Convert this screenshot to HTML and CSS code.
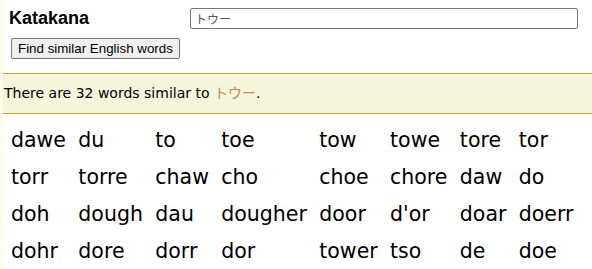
FILE: index.html
```html
<!DOCTYPE html>
<html lang="en">
<head>
    <meta charset="UTF-8">
    <meta name="viewport" content="width=device-width, initial-scale=1.0">
    <title>Katakana to English</title>
    <link rel="stylesheet" href="styles.css">
</head>
<body>
    <div class="page">
        <form class="lookup">
            <div class="lookup-row">
                <label class="lookup-label" for="kana">Katakana</label>
                <input type="text" class="lookup-input" id="kana" value="トウー">
            </div>
            <button type="button" class="lookup-button">Find similar English words</button>
        </form>

        <div class="result">
            There are 32 words similar to <span class="kana">トウー</span>.
        </div>

        <table class="words">
            <tr><td>dawe</td><td>du</td><td>to</td><td>toe</td><td>tow</td><td>towe</td><td>tore</td><td>tor</td></tr>
            <tr><td>torr</td><td>torre</td><td>chaw</td><td>cho</td><td>choe</td><td>chore</td><td>daw</td><td>do</td></tr>
            <tr><td>doh</td><td>dough</td><td>dau</td><td>dougher</td><td>door</td><td>d'or</td><td>doar</td><td>doerr</td></tr>
            <tr><td>dohr</td><td>dore</td><td>dorr</td><td>dor</td><td>tower</td><td>tso</td><td>de</td><td>doe</td></tr>
        </table>
    </div>
</body>
</html>
```

FILE: styles.css
```css
body {
    margin: 0;
    background-color: #fdfdea;
    font-family: "DejaVu Sans", Verdana, sans-serif;
    color: #000;
}

.page {
    margin-left: 3px;
    min-height: 100vh;
    background-color: #fff;
}

.lookup {
    margin: 0;
    padding: 8px 0 0 6px;
}

.lookup-row {
    display: flex;
    align-items: center;
}

.lookup-label {
    width: 181px;
    font-family: "Liberation Sans", Arial, sans-serif;
    font-size: 18px;
    font-weight: bold;
}

.lookup-input {
    box-sizing: border-box;
    width: 388px;
    height: 21px;
    margin: 0;
    padding: 1px 4px;
    border: 1px solid #767676;
    border-radius: 2px;
    font-family: "Noto Sans CJK JP", sans-serif;
    font-size: 12px;
    color: #555;
}

.lookup-button {
    box-sizing: border-box;
    height: 21px;
    margin: 9px 0 0 2px;
    padding: 1px 6px;
    border: 1px solid #767676;
    border-radius: 2px;
    background-color: #efefef;
    font-family: "Liberation Sans", Arial, sans-serif;
    font-size: 13.33px;
    color: #000;
}

.result {
    margin-top: 14px;
    padding: 10px 1px 12px;
    border-top: 1px solid #daa520;
    border-bottom: 1px solid #daa520;
    background-color: #f5f5dc;
    font-size: 14px;
    line-height: 16px;
}

.kana {
    font-family: "Noto Sans CJK JP", sans-serif;
    color: #c08a5a;
}

.words {
    margin: 8px 0 0 8px;
    border-collapse: collapse;
    font-size: 20.5px;
}

.words td {
    padding: 7px 12.4px 7px 0;
    line-height: 23px;
    white-space: nowrap;
}
```
